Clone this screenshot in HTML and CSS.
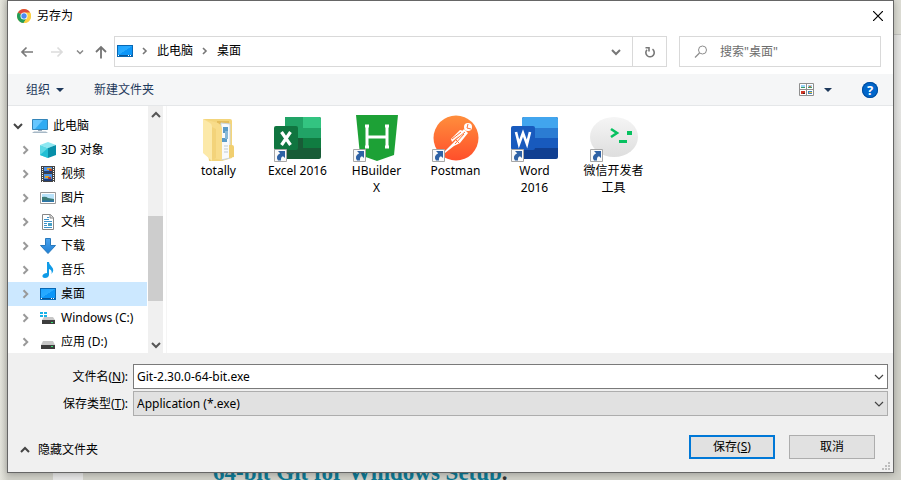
FILE: index.html
```html
<!DOCTYPE html>
<html lang="zh-CN">
<head>
<meta charset="utf-8">
<title>另存为</title>
<link rel="stylesheet" href="styles.css">
</head>
<body>
<svg class="defs" aria-hidden="true">
  <defs>
    <linearGradient id="screen" x1="0" y1="0" x2="1" y2="1"><stop offset="0" stop-color="#1ea4ff"/><stop offset=".5" stop-color="#29abff"/><stop offset=".52" stop-color="#0c96f8"/><stop offset="1" stop-color="#0c96f8"/></linearGradient>
    <linearGradient id="flame" x1="0" y1="0" x2="0" y2="1"><stop offset="0" stop-color="#ff8e3c"/><stop offset="1" stop-color="#ff4f2b"/></linearGradient>
    <linearGradient id="arrowfill" x1="0" y1="0" x2="0" y2="1"><stop offset="0" stop-color="#4aa3ee"/><stop offset="1" stop-color="#1f7fd4"/></linearGradient>
    <linearGradient id="pale" x1="0" y1="0" x2="0" y2="1"><stop offset="0" stop-color="#f5f5f5"/><stop offset="1" stop-color="#dedede"/></linearGradient>
    <symbol id="right" viewBox="0 0 8 8"><path d="M2 1 5 4 2 7" fill="none" stroke="currentColor" stroke-width="1.6"/></symbol>
    <symbol id="down" viewBox="0 0 10 10"><path d="M1 3 5 7 9 3" fill="none" stroke="currentColor" stroke-width="2"/></symbol>
    <symbol id="thin-down" viewBox="0 0 10 10"><path d="M1 3 5 7 9 3" fill="none" stroke="currentColor" stroke-width="1.2"/></symbol>
    <symbol id="up" viewBox="0 0 10 10"><path d="M1 7 5 3 9 7" fill="none" stroke="currentColor" stroke-width="2"/></symbol>
    <symbol id="desk" viewBox="0 0 16 16"><path d="M0 2h16v12H0z" fill="#0868b4"/><path d="M1 3h14v9H1z" fill="url(#screen)"/><path d="M1 12h14v1H1z" fill="#07579b"/><path d="M1 12h1v1H1zM11 12h1v1h-1zM13 12h1v1h-1z" fill="#fff"/></symbol>
    <symbol id="short" viewBox="0 0 13 13"><path d="M.5.5h12v12H.5z" fill="#fafafa" stroke="#a7a7a7"/><path d="M4 2h7v7L9 7.200Q6.500 8 7 11.500H4Q1 7 6.200 4.200z" fill="#2f62a5"/></symbol>
  </defs>
</svg>
<div class="desktop">
  <div class="page" aria-hidden="true">
    <div class="page-margin"></div>
    <p class="page-line"><a href="#setup">64-bit Git for Windows Setup</a>.</p>
  </div>

  <main class="dialog">
    <header class="titlebar">
      <svg class="i14" viewBox="0 0 14 14"><circle cx="7" cy="7" r="7" fill="#fccf42"/><path d="M7 7 .94 3.500A7 7 0 0 1 13.060 3.500z" fill="#df4a3e"/><path d="M.94 3.500A7 7 0 0 0 6.500 14L10 8.500 7 7z" fill="#229c5a"/><path d="M7 3.500h6.060A7 7 0 0 1 6.700 14L10.300 8z" fill="#fccf42"/><circle cx="7" cy="7" r="3.500" fill="#fff"/><circle cx="7" cy="7" r="2.700" fill="#4a8af4"/></svg>
      <h1>另存为</h1>
      <button class="close" aria-label="关闭"><svg class="i10" viewBox="0 0 10 10"><path d="M0 0 10 10M10 0 0 10" stroke="#000" stroke-width="1.200"/></svg></button>
    </header>

    <nav class="navbar">
      <button class="nav" aria-label="后退"><svg class="i14" viewBox="0 0 14 14"><path d="M13 7H2M6.500 2.500 2 7l4.500 4.500" fill="none" stroke="#7a7a7a" stroke-width="1.700"/></svg></button>
      <button class="nav" aria-label="前进"><svg class="i14" viewBox="0 0 14 14"><path d="M1 7h11M7.500 2.500 12 7l-4.500 4.500" fill="none" stroke="#dcdcdc" stroke-width="1.700"/></svg></button>
      <button class="nav recent" aria-label="最近"><svg class="i8" viewBox="0 0 8 8"><path d="M1 2.500 4 5.500 7 2.500" fill="none" stroke="#888" stroke-width="1.500"/></svg></button>
      <button class="nav" aria-label="上移"><svg class="i14" viewBox="0 0 14 14"><path d="M7 13.500V2M2 7l5-5 5 5" fill="none" stroke="#747474" stroke-width="1.800"/></svg></button>
      <div class="address">
        <div class="crumbs">
          <svg class="i16"><use href="#desk"/></svg>
          <svg class="i8"><use href="#right"/></svg>
          <button>此电脑</button>
          <svg class="i8"><use href="#right"/></svg>
          <button>桌面</button>
        </div>
        <button class="history" aria-label="以前的位置"><svg class="i10"><use href="#down"/></svg></button>
        <button class="refresh" aria-label="刷新"><svg class="i12" viewBox="0 0 12 12"><path d="M8.500 3.200A4.200 4.200 0 1 1 3 3.700M1.500 1.800H5v3.700" fill="none" stroke="#777" stroke-width="1.600"/></svg></button>
      </div>
      <label class="search">
        <svg class="i14" viewBox="0 0 14 14"><circle cx="8.500" cy="5" r="4" fill="none" stroke="#8d8d8d"/><path d="M5.500 8 1 12.500" stroke="#8d8d8d" stroke-width="1.200"/></svg>
        <input type="search" placeholder='搜索"桌面"' aria-label="搜索">
      </label>
    </nav>

    <div class="toolbar">
      <button class="organize">组织 <i class="caret"></i></button>
      <button>新建文件夹</button>
      <button class="view" aria-label="更改视图">
        <svg class="view-icon" viewBox="0 0 15 13"><path d="M.5.5h14v12H.5zM7.500 0v13M0 6.500h15" fill="#fff" stroke="#8f8f8f"/><path d="M2 2h4v3H2z" fill="#9bd4fa"/><path d="M2 4h4v1H2zM9 4h4v1H9z" fill="#3c9d6b"/><path d="M9 2h4v2H9z" fill="#a7cde6"/><path d="M10 3h2v1h-2z" fill="#e7632d"/><path d="M2 8h4v3H2z" fill="#cf3626"/><path d="M4 10h2v1H4z" fill="#531a1c"/><path d="M9 8h4v3H9z" fill="#4380bd"/><path d="M10 9h3v1h-3z" fill="#ead040"/></svg>
        <i class="caret"></i>
      </button>
      <button class="help" aria-label="帮助"><span>?</span></button>
    </div>

    <div class="browser">
      <ul class="tree">
        <li><button class="root"><svg class="i10"><use href="#down"/></svg><svg class="i16" viewBox="0 0 16 16"><path d="M.5 1.500h15v10H.5z" fill="#31acf3" stroke="#3485b9"/><path d="M1 2h10L3 11H1z" fill="#67c7ff"/><path d="M6 12h4v1H6z" fill="#9ab"/><path d="M2 13.500h12l2 1.500H0z" fill="#a6b8c6"/></svg>此电脑</button></li>
        <li><button><svg class="i10"><use href="#right"/></svg><svg class="i16" viewBox="0 0 16 16"><path d="M0 3 8 0l8 3-8 3z" fill="#8ee8f2"/><path d="M0 3 8 6v10L0 13z" fill="#5dd8e5"/><path d="M16 3 8 6v10l8-3z" fill="#078fa9"/><path d="M0 13 8 6v10z" fill="#23bfd4"/></svg>3D 对象</button></li>
        <li><button><svg class="i10"><use href="#right"/></svg><svg class="i16" viewBox="0 0 16 16"><path d="M1 0h14v16H1z" fill="#444"/><path d="M4 1h8v6H4zM4 8h8v7H4z" fill="#4f92e6"/><path d="M4 5h8v2H4zM4 13h8v2H4z" fill="#203f78"/><path d="M7 2h4v2H7zM5 10h4v2H5z" fill="#e0a52c"/><path d="M9 3h3v2H9zM8 11h3v2H8z" fill="#b74129"/><path d="M2.500 1v15M13.500 1v15" stroke="#fff" stroke-dasharray="1 1"/></svg>视频</button></li>
        <li><button><svg class="i10"><use href="#right"/></svg><svg class="i16" viewBox="0 0 16 16"><path d="M.5 2.500h15v11H.5z" fill="#fff" stroke="#999"/><path d="M2 4h12v8H2z" fill="#b9e3fa"/><path d="M2 7q4-1 6 1l6 1v3H2z" fill="#3d7d78"/><path d="M2 10.500h12V12H2z" fill="#2c75aa"/></svg>图片</button></li>
        <li><button><svg class="i10"><use href="#right"/></svg><svg class="i16" viewBox="0 0 16 16"><path d="M2.500.5h8l3 3v12h-11z" fill="#fff" stroke="#888"/><path d="M10 .5V4h3.500" fill="#ddd" stroke="#888"/><path d="M7 3.500h2M4 5.500h5M4 7.500h8M4 9.500h3M4 11.500h3M4 13.500h8" stroke="#3d92c8"/><path d="M8 9h4v3H8z" fill="#48a0c5"/></svg>文档</button></li>
        <li><button><svg class="i10"><use href="#right"/></svg><svg class="i16" viewBox="0 0 16 16"><path d="M5.500.5h5v7h5L8 15.500.5 7.500h5z" fill="url(#arrowfill)" stroke="#2879bd"/></svg>下载</button></li>
        <li><button><svg class="i10"><use href="#right"/></svg><svg class="i16" viewBox="0 0 16 16"><path d="M7 0h2q0 2.500 2.500 4.500Q15 8 11.500 12q1-4-2.500-5v6q-.5 3-4 3-3-.2-2.500-2.500Q3.500 11 7 11z" fill="#109be7"/></svg>音乐</button></li>
        <li><button class="selected" aria-current="true"><svg class="i10"><use href="#right"/></svg><svg class="i16"><use href="#desk"/></svg>桌面</button></li>
        <li><button><svg class="i10"><use href="#right"/></svg><svg class="i16" viewBox="0 0 16 16"><path d="M0 2h3v2H0zM4 2h3v2H4zM0 5h3v2H0zM4 5h3v2H4z" fill="#18b3e8"/><path d="M4 7h9l2 3H2z" fill="#c7c7c7"/><path d="M2 10h13v4H2z" fill="#3d3d3d"/><path d="M11 12h2v1h-2z" fill="#37df70"/></svg>Windows (C:)</button></li>
        <li><button><svg class="i10"><use href="#right"/></svg><svg class="i16" viewBox="0 0 16 16"><path d="M3 7h10l2 4H1z" fill="#c7c7c7"/><path d="M1 11h14v4H1z" fill="#3d3d3d"/><path d="M11 12h2v1h-2z" fill="#37df70"/></svg>应用 (D:)</button></li>
      </ul>
      <div class="scrollbar">
        <button aria-label="向上滚动"><svg class="i10"><use href="#up"/></svg></button>
        <div class="track"><div class="thumb"></div></div>
        <button aria-label="向下滚动"><svg class="i10"><use href="#down"/></svg></button>
      </div>
      <ul class="files">
        <li><button><svg class="i48" viewBox="0 0 48 48"><path d="M9 5h26q2 0 2 2v37l-10 3H14z" fill="#f3d57c"/><path d="M22 7h12v36H22z" fill="#e4bd5c"/><path d="m26 9 9 1v34l-9 2z" fill="#f8fafb" stroke="#cbd5da"/><path d="M28 13h5v6h-5zM27 24h5v4h-5z" fill="#5b9bc7"/><path d="M30 17h3v8h-3z" fill="#88b8d6"/><path d="M29 32h4M29 35h4M29 38h4" stroke="#bfc9cf"/><path d="M34 31h3q2 0 2 2v10l-5 1z" fill="#f1cf70"/><path d="m8 5 15 4q4 2 4 6v31l-10-2z" fill="#f8dc8a"/><path d="m8 5 7 4q2 1 2 4v34l-9-8z" fill="#fce9a9"/><path d="m17 13 4 2v29l-4 2z" fill="#f3d37a"/></svg><span>totally</span></button></li>
        <li><button><svg class="i48" viewBox="0 0 48 48"><rect x="11" y="3" width="36" height="42" rx="2" fill="#185c37"/><path d="M11 3h18v21H11z" fill="#21a366"/><path d="M29 3h16q2 0 2 2v9H29z" fill="#33c481"/><path d="M29 14h18v10H29z" fill="#21a366"/><path d="M29 24h18v10H29z" fill="#107c41"/><rect y="12" width="24" height="24" rx="2" fill="#107540"/><path d="m7.500 18 9 13M16.500 18l-9 13" stroke="#fff" stroke-width="3.200"/><use href="#short" x="0" y="35" width="13" height="13"/></svg><span>Excel 2016</span></button></li>
        <li><button><svg class="i48" viewBox="0 0 48 48"><path d="M3 1h42l-4 40-17 6-17-6z" fill="#1da136"/><path d="M14 12v21M34 12v21M14 23h20M12 12h4M32 12h4M12 33h4M32 33h4" stroke="#fff" stroke-width="3" fill="none"/><use href="#short" x="0" y="35" width="13" height="13"/></svg><span>HBuilder<br>X</span></button></li>
        <li><button><svg class="i48" viewBox="0 0 48 48"><circle cx="24" cy="24" r="22.500" fill="url(#flame)"/><circle cx="36" cy="13" r="4" fill="#fff"/><path d="m36 10-1 4 4 1" fill="none" stroke="#ff7038"/><path d="m32 15 4 4-8 10-6 3-9 7-1-1 10-10z" fill="#fff"/><path d="m19 25 9-9 4 1-12 11z" fill="#fff"/><path d="m20 25 9-7M21 28l12-10M23 30l9-10M24 26l3 3" stroke="#ff7435" fill="none"/><use href="#short" x="0" y="35" width="13" height="13"/></svg><span>Postman</span></button></li>
        <li><button><svg class="i48" viewBox="0 0 48 48"><rect x="11" y="3" width="36" height="42" rx="2" fill="#103f91"/><path d="M11 14V5q0-2 2-2h32q2 0 2 2v9z" fill="#41a5ee"/><path d="M11 14h36v10H11z" fill="#2b7cd3"/><path d="M11 24h36v10H11z" fill="#185abd"/><rect y="12" width="24" height="24" rx="2" fill="#185abd"/><path d="m5 18 3 12 4-11 4 11 3-12" stroke="#fff" stroke-width="2.600" fill="none"/><use href="#short" x="0" y="35" width="13" height="13"/></svg><span>Word<br>2016</span></button></li>
        <li><button><svg class="i48" viewBox="0 0 48 48"><ellipse cx="24" cy="23" rx="24" ry="20" fill="url(#pale)"/><path d="m21 15 6 4-6 4" stroke="#07c160" stroke-width="2.600" fill="none"/><path d="M37 17h5v4h-5zM29 26h8v3h-8z" fill="#07c160"/><use href="#short" x="0" y="35" width="13" height="13"/></svg><span>微信开发者工具</span></button></li>
      </ul>
    </div>

    <form class="footer">
      <label for="name">文件名(<u>N</u>):</label>
      <div class="combo">
        <input id="name" type="text" value="Git-2.30.0-64-bit.exe">
        <svg class="i10"><use href="#thin-down"/></svg>
      </div>
      <label for="type">保存类型(<u>T</u>):</label>
      <div class="combo">
        <select id="type"><option>Application (*.exe)</option></select>
        <svg class="i10"><use href="#thin-down"/></svg>
      </div>
      <div class="actions">
        <button type="button" class="hide"><svg class="i10"><use href="#up"/></svg>隐藏文件夹</button>
        <button type="button" class="push primary"><span>保存(<u>S</u>)</span></button>
        <button type="button" class="push">取消</button>
      </div>
      <svg class="grip" viewBox="0 0 8 8"><path d="M6 0h2v2H6zM3 3h2v2H3zM6 3h2v2H6zM0 6h2v2H0zM3 6h2v2H3zM6 6h2v2H6z" fill="#bdbdbd"/></svg>
    </form>
  </main>
</div>
</body>
</html>
```
FILE: styles.css
```css
* { box-sizing: border-box; }
body { margin: 0; background: #d5d5cc; font: 12px/16px "Noto Sans", "Noto Sans CJK SC", sans-serif; color: #000; }
button, input, select { font: inherit; color: inherit; }
button { border: 0; padding: 0; background: none; }
svg { display: block; flex: none; }
ul { list-style: none; margin: 0; padding: 0; }
.defs { position: absolute; width: 0; height: 0; }
.i8 { width: 8px; height: 8px; }
.i10 { width: 10px; height: 10px; }
.i12 { width: 12px; height: 12px; }
.i14 { width: 14px; height: 14px; }
.i16 { width: 16px; height: 16px; }
.i48 { width: 48px; height: 48px; }

/* Web page behind the dialog */
.desktop { position: relative; display: flow-root; overflow: hidden; min-height: 100vh; }
.page { position: absolute; inset: 0; display: flex; align-items: flex-end; background: linear-gradient(#dcdcd4 34px, #c4c4c0 34px, #c4c4c0 35px, #e4e4e2 35px, #e4e4e2 110px, transparent 330px) right / 8px 100% no-repeat, linear-gradient(90deg, #e4e4dc, #d0d0c8 8px, #d0d0c8); }
.page-margin { width: 30px; height: 8px; margin-left: 53px; background: #e6e6e6; }
.page-line { margin: 0 0 -6px 130px; font: bold 23px/26px "Liberation Serif", serif; color: #333; white-space: nowrap; }
.page-line a { color: #0e7893; text-decoration: none; }

.dialog { position: relative; margin: 0 7px 7px; border: 1px solid #666; background: #fff; box-shadow: 0 1px 7px #0004; }

.titlebar { display: flex; align-items: center; height: 29px; padding: 0 10px 0 9px; }
.titlebar h1 { margin: 0 auto 0 6px; font-size: 12px; font-weight: 400; }

.navbar { display: flex; align-items: center; padding: 6px 12px 7px; }
.nav { margin-right: 16px; color: #777; }
.recent { margin: 0 10px 0 -4px; }
.recent + .nav { margin-right: 6px; }
.address { flex: 1; display: flex; height: 31px; border: 1px solid #d9d9d9; color: #777; }
.crumbs { flex: 1; display: flex; align-items: center; gap: 8px; padding: 0 2px 2px; }
.crumbs button { color: #000; }
.history { display: grid; place-items: center; width: 32px; }
.refresh { display: grid; place-items: center; width: 34px; border-left: 1px solid #d9d9d9; }
.search { display: flex; align-items: center; gap: 12px; width: 202px; height: 31px; margin-left: 12px; padding: 0 14px; border: 1px solid #d9d9d9; }
.search input { flex: 1; min-width: 0; border: 0; padding: 0; outline: 0; background: none; }
.search input::placeholder { color: #6d6d6d; opacity: 1; }

.toolbar { display: flex; align-items: center; height: 32px; padding: 0 15px 0 18px; border-bottom: 1px solid #e5e7e9; background: #f5f6f7; color: #1e395b; }
.organize { display: flex; align-items: center; gap: 6px; margin-right: 30px; }
.caret { border: 4px solid transparent; border-top-color: #1e395b; border-bottom: 0; }
.view { display: flex; align-items: center; gap: 10px; margin: 0 30px 0 auto; }
.view-icon { width: 15px; height: 13px; }
.help { display: grid; place-items: center; width: 16px; height: 16px; border-radius: 50%; background: #0066cb; box-shadow: inset 0 0 0 1px #004c9c; color: #fff; font-size: 13px; font-weight: 700; }

.browser { display: flex; height: 247px; overflow: hidden; }
.tree { width: 139px; flex: none; padding-top: 8px; }
.tree button { display: flex; align-items: center; gap: 5px; width: 100%; height: 24px; padding-left: 13px; text-align: left; white-space: nowrap; }
.tree .i10 { margin-right: 4px; color: #999; }
.tree .root { padding-left: 5px; }
.tree .root .i10 { color: #444; }
.tree .selected { background: #cce8ff; }
.scrollbar { display: flex; flex-direction: column; width: 15px; flex: none; margin-left: 1px; background: #f0f0f0; color: #555; }
.scrollbar button { display: grid; place-items: center; height: 17px; }
.track { flex: 1; padding-top: 93px; }
.thumb { height: 85px; background: #cdcdcd; }
.files { flex: 1; display: flex; flex-wrap: wrap; align-content: flex-start; margin-left: 3px; padding: 8px 0 0 12px; border-left: 1px solid #f5f5f5; }
.files li { width: 79px; }
.files button { display: flex; flex-direction: column; align-items: center; width: 100%; padding: 0 8px; line-height: 17px; }

.footer { position: relative; display: grid; grid-template-columns: 120px 1fr; align-items: center; gap: 2px 5px; padding: 11px 5px 13px 0; background: #f0f0f0; }
.footer label { text-align: right; }
.combo { display: grid; align-items: center; }
.combo > * { grid-area: 1 / 1; }
.combo input, .combo select { width: 100%; height: 25px; margin: 0; padding: 0 20px 0 3px; border: 1px solid #7a7a7a; border-radius: 0; background: #fff; appearance: none; }
.combo select { border-color: #adadad; background: #e1e1e1; }
.combo svg { justify-self: end; margin-right: 4px; color: #444; pointer-events: none; }
.actions { grid-column: 1 / -1; display: flex; align-items: center; gap: 14px; padding: 17px 13px 0 12px; }
.hide { display: flex; align-items: center; gap: 8px; margin: 6px auto 0 0; color: #000; }
.hide svg { color: #444; }
.push { width: 86px; height: 24px; border: 1px solid #adadad; background: #e1e1e1; }
.primary { border: 2px solid #0078d7; }
.grip { position: absolute; right: 3px; bottom: 2px; width: 8px; height: 8px; }
```
